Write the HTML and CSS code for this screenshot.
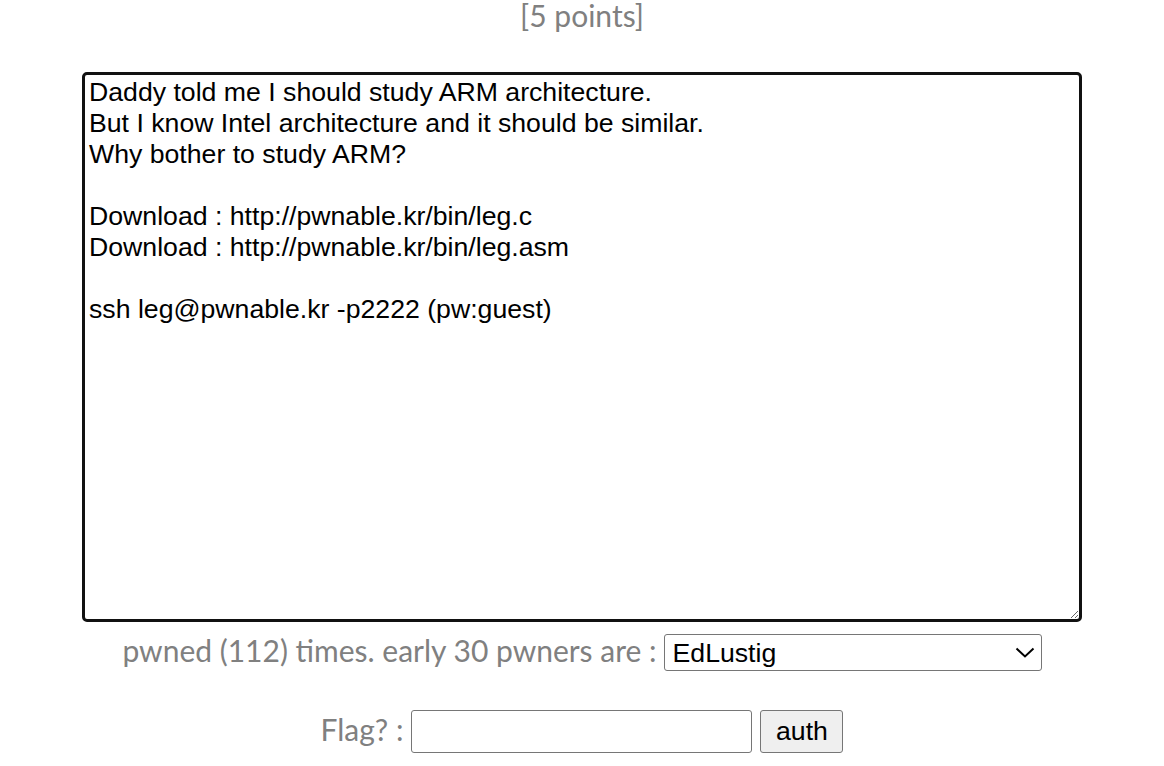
FILE: index.html
```html
<!DOCTYPE html>
<html>
<head>
<meta charset="utf-8">
<link rel="stylesheet" href="styles.css">
</head>
<body>
<div class="page">
  <div class="points">[5 points]</div>
  <textarea class="desc" readonly>Daddy told me I should study ARM architecture.
But I know Intel architecture and it should be similar.
Why bother to study ARM?

Download : http://pwnable.kr/bin/leg.c
Download : http://pwnable.kr/bin/leg.asm

ssh leg@pwnable.kr -p2222 (pw:guest)</textarea>
  <div class="row pwned">
    <span class="label">pwned (112) times. early 30 pwners are :</span>
    <div class="select-wrap">
      <select class="pwners"><option>EdLustig</option></select>
      <svg class="chevron" width="20" height="12" viewBox="0 0 20 12"><path d="M1.5 1.5 L10 9.5 L18.5 1.5" fill="none" stroke="#000" stroke-width="2"/></svg>
    </div>
  </div>
  <div class="row flag">
    <span class="label">Flag? :</span>
    <input class="flag-input" type="text">
    <button class="auth">auth</button>
  </div>
</div>
</body>
</html>
```
FILE: styles.css
```css
html, body {
  margin: 0;
  padding: 0;
  background: #ffffff;
}
.page {
  width: 1164px;
  display: flex;
  flex-direction: column;
  align-items: center;
}
.points {
  font-family: "Lato", "Open Sans", sans-serif;
  font-size: 30px;
  color: #808080;
  line-height: 31px;
  height: 31px;
}
.desc {
  margin-top: 41px;
  width: 1000px;
  height: 550px;
  box-sizing: border-box;
  border: 3px solid #111;
  border-radius: 5px;
  padding: 2px 4px;
  font-family: "Liberation Sans", Arial, sans-serif;
  font-size: 26.67px;
  line-height: 31px;
  color: #000;
  resize: both;
  outline: none;
}
.row {
  display: flex;
  align-items: center;
  justify-content: center;
}
.label {
  font-family: "Lato", "Open Sans", sans-serif;
  font-size: 30px;
  line-height: 30px;
  color: #808080;
  margin-bottom: 5px;
}
.pwned {
  margin-top: 12px;
  gap: 7px;
}
.select-wrap {
  position: relative;
  display: flex;
}
.pwners {
  appearance: none;
  -webkit-appearance: none;
  width: 378px;
  height: 37px;
  box-sizing: border-box;
  font-family: "Liberation Sans", Arial, sans-serif;
  font-size: 26.67px;
  border: 1px solid #767676;
  border-radius: 3px;
  background: #fff;
  color: #000;
  padding: 0 8px;
  outline: none;
}
.chevron {
  position: absolute;
  right: 7px;
  top: 13px;
  pointer-events: none;
}
.flag {
  margin-top: 39px;
  gap: 8px;
}
.flag-input {
  width: 341px;
  height: 43px;
  box-sizing: border-box;
  border: 1px solid #767676;
  border-radius: 3px;
  font-size: 24px;
  outline: none;
}
.auth {
  height: 43px;
  width: 83px;
  box-sizing: border-box;
  font-family: "Liberation Sans", Arial, sans-serif;
  font-size: 26.67px;
  border: 1px solid #767676;
  border-radius: 3px;
  background: #efefef;
  color: #000;
  padding: 0;
}
```
